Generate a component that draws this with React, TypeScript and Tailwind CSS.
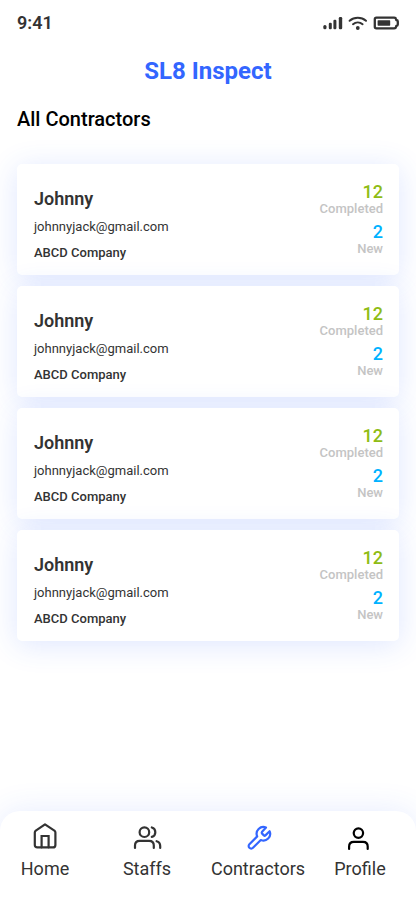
import { FC, ReactNode } from "react";

type Contractor = {
  id: number;
  name: string;
  email: string;
  company: string;
  completed: number;
  fresh: number;
};

const contractors: Contractor[] = [1, 2, 3, 4].map((id) => ({
  id,
  name: "Johnny",
  email: "johnnyjack@gmail.com",
  company: "ABCD Company",
  completed: 12,
  fresh: 2,
}));

const SignalIcon = () => (
  <svg width="20" height="14" viewBox="0 0 20 14" fill="#333" aria-hidden>
    <rect x="0.3" y="9" width="3.2" height="4.2" rx="1.5" />
    <rect x="5.8" y="6.8" width="3" height="6.4" rx="1.2" />
    <rect x="10.4" y="3.8" width="3" height="9.4" rx="1.2" />
    <rect x="15.8" y="1" width="3.4" height="12.2" rx="1.2" />
  </svg>
);

const WifiIcon = () => (
  <svg
    width="20"
    height="14"
    viewBox="0 0 20 14"
    fill="none"
    stroke="#333"
    strokeWidth="2"
    strokeLinecap="round"
    aria-hidden
  >
    <path d="M1.6 4.8C6.2 0.8 13.4 0.8 18 4.8" />
    <path d="M5 8.2C7.8 5.8 11.8 5.8 14.6 8.2" />
    <circle cx="9.8" cy="12" r="1.9" fill="#333" stroke="none" />
  </svg>
);

const BatteryIcon = () => (
  <svg width="26" height="14" viewBox="0 0 26 14" fill="none" aria-hidden>
    <path
      d="M3.4 1.6H21.2Q22.8 1.6 23 3L23.3 4Q24.8 4.2 24.8 5.4V8.6Q24.8 9.8 23.3 10L23 11Q22.8 12.4 21.2 12.4H3.4Q1.8 12.4 1.8 10.8V3.2Q1.8 1.6 3.4 1.6Z"
      stroke="#333"
      strokeWidth="2.3"
    />
    <rect x="4.6" y="4.3" width="12.6" height="5.4" rx="0.6" fill="#333" />
  </svg>
);

const NavIcon = ({ children }: { children: ReactNode }) => (
  <svg
    width="30"
    height="30"
    viewBox="0 0 30 30"
    fill="none"
    stroke="currentColor"
    strokeWidth="2.2"
    strokeLinecap="round"
    strokeLinejoin="round"
    aria-hidden
  >
    {children}
  </svg>
);

const HomeIcon = () => (
  <NavIcon>
    <path d="M15 2.4L24.4 8.6Q25.4 9.4 25.4 10.6V22.9Q25.4 25.4 22.9 25.4H7.3Q4.8 25.4 4.8 22.9V10.6Q4.8 9.4 5.8 8.6Z" />
    <path d="M11.6 25.3V14H18.6V25.3" strokeLinejoin="miter" />
  </NavIcon>
);

const StaffsIcon = () => (
  <NavIcon>
    <circle cx="12.4" cy="10.2" r="4.8" />
    <path d="M3 26V23.6Q3 18.9 7.7 18.9H17.1Q21.8 18.9 21.8 23.6V26" />
    <path d="M19.8 5.5A4.9 4.9 0 0 1 19.8 14.9" />
    <path d="M24.6 19.2Q28.2 20.2 28.2 24V26" />
  </NavIcon>
);

const WrenchIcon = () => (
  <NavIcon>
    <path d="M19.1 10.1a1.1 1.1 0 0 0 0 1.5l1.8 1.8a1.1 1.1 0 0 0 1.5 0l4.2-4.2a6.7 6.7 0 0 1-8.8 8.8l-7.8 7.8a2.5 2.5 0 0 1-3.6-3.6l7.8-7.8a6.7 6.7 0 0 1 8.8-8.8l-3.9 4.2z" />
  </NavIcon>
);

const ProfileIcon = () => (
  <NavIcon>
    <circle cx="13.4" cy="11.1" r="4.7" />
    <path d="M4.1 27V24.6Q4.1 19.9 8.8 19.9H18Q22.7 19.9 22.7 24.6V27" />
  </NavIcon>
);

const ContractorCard: FC<Contractor> = ({
  name,
  email,
  company,
  completed,
  fresh,
}) => (
  <li className="flex justify-between rounded-[5px] bg-white pt-[18px] pr-4 pb-3 pl-[17px] shadow-[0_4px_30px_rgba(51,102,255,0.16)]">
    <div className="pt-[3px] text-[#333]">
      <h2 className="text-lg leading-7 font-semibold">{name}</h2>
      <p className="pt-[2px] text-[13px] leading-6">{email}</p>
      <p className="pt-1 text-[13px] leading-5 font-medium">{company}</p>
    </div>
    <div className="flex flex-col gap-[6px] text-right font-medium">
      <div>
        <p className="text-lg leading-5 text-[#8fbc14]">{completed}</p>
        <p className="text-[13px] leading-[14px] text-[#c4c4c4]">Completed</p>
      </div>
      <div>
        <p className="text-lg leading-5 text-[#00b2ff]">{fresh}</p>
        <p className="text-[13px] leading-[14px] text-[#c4c4c4]">New</p>
      </div>
    </div>
  </li>
);

type NavItemProps = { label: string; icon: ReactNode; className: string };

const NavItem: FC<NavItemProps> = ({ label, icon, className }) => (
  <a href="#" className="flex flex-col items-center gap-[3px]">
    <span className={className}>{icon}</span>
    <span className="text-lg leading-7 text-[#333]">{label}</span>
  </a>
);

const App = () => (
  <div className="flex min-h-screen flex-col bg-white font-['Roboto',sans-serif]">
    <div className="flex items-center justify-between pt-[9px] pr-[17px] pl-[17px] text-[#333]">
      <span className="text-lg leading-7 font-semibold">9:41</span>
      <div className="flex items-center gap-[5px]">
        <SignalIcon />
        <WifiIcon />
        <BatteryIcon />
      </div>
    </div>

    <header className="pt-[18px] text-center">
      <p className="text-2xl leading-8 font-bold text-[#3366ff]">SL8 Inspect</p>
    </header>

    <main className="flex-1 pt-[18px] pr-[17px] pb-10 pl-[17px]">
      <h1 className="text-xl leading-7 font-medium text-black">
        All Contractors
      </h1>
      <ul className="flex flex-col gap-[11px] pt-[31px]">
        {contractors.map((contractor) => (
          <ContractorCard key={contractor.id} {...contractor} />
        ))}
      </ul>
    </main>

    <nav className="grid grid-cols-[90fr_114fr_108fr_96fr] rounded-t-[20px] bg-white pt-[11px] pr-2 pb-[17px] shadow-[0_0_32px_rgba(51,102,255,0.12)]">
      <NavItem label="Home" icon={<HomeIcon />} className="text-[#333]" />
      <NavItem label="Staffs" icon={<StaffsIcon />} className="text-[#333]" />
      <NavItem
        label="Contractors"
        icon={<WrenchIcon />}
        className="text-[#3366ff]"
      />
      <NavItem label="Profile" icon={<ProfileIcon />} className="text-black" />
    </nav>
  </div>
);

export default App;
